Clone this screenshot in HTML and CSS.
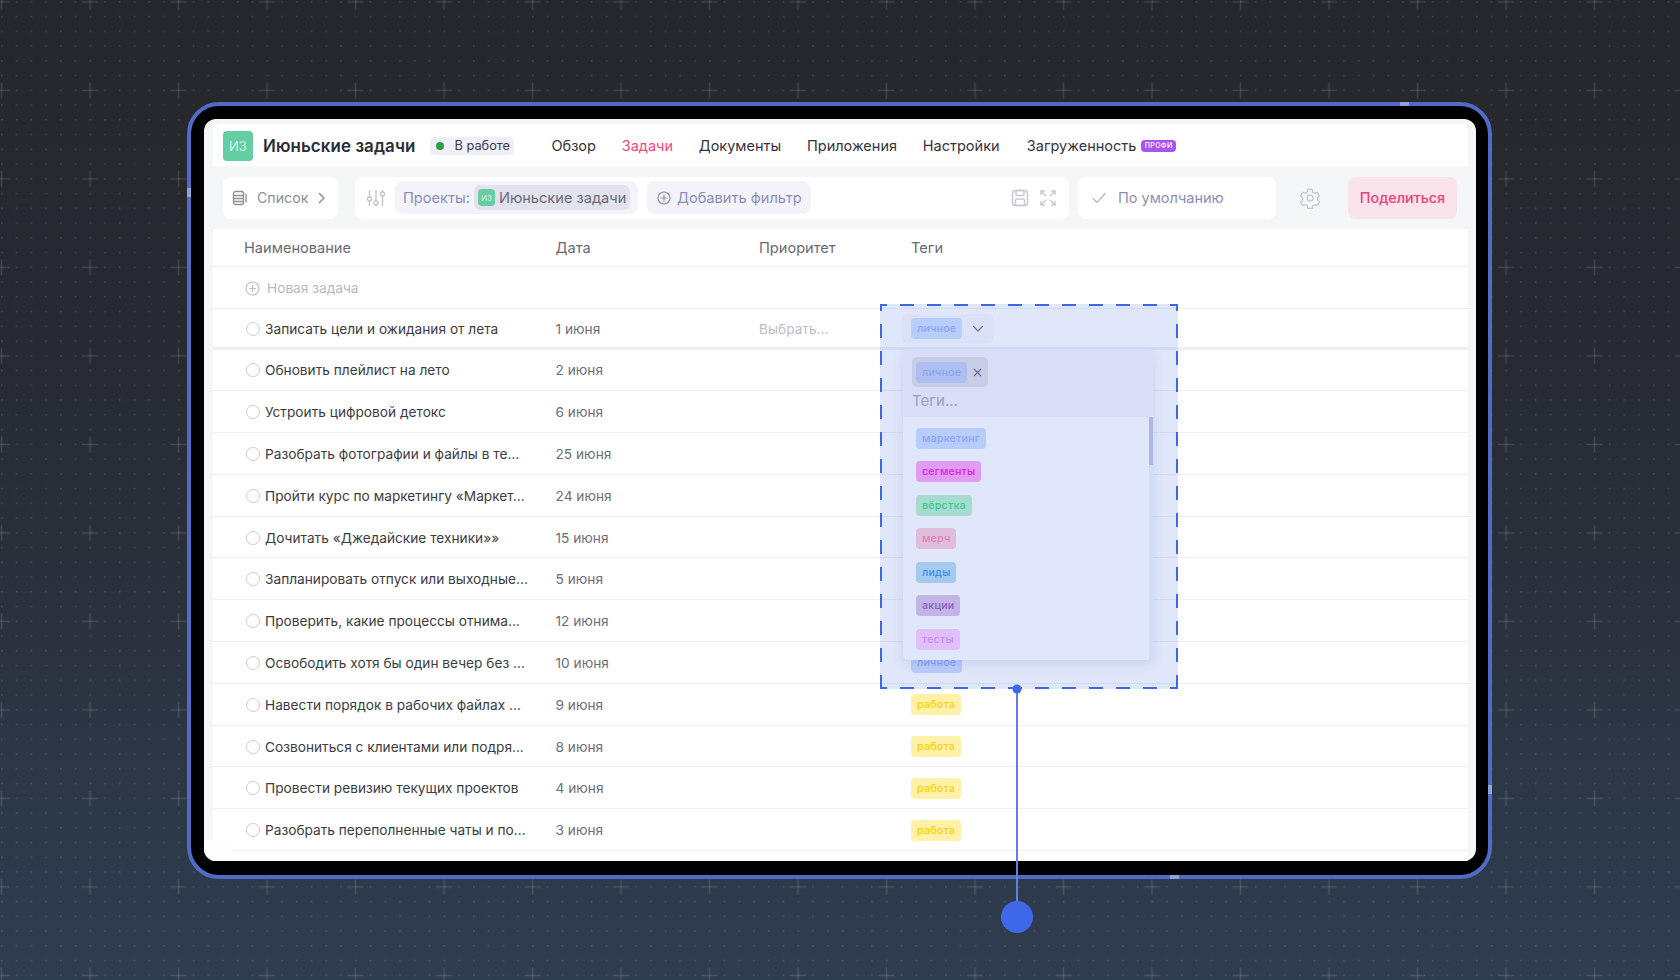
FILE: index.html
```html
<!DOCTYPE html>
<html lang="ru">
<head>
    <meta charset="UTF-8">
    <title>Июньские задачи</title>
    <link rel="stylesheet" href="styles.css">
</head>
<body>
    <!-- Фон: точки и крестики -->
    <svg class="backdrop" width="1680" height="980">
        <defs>
            <pattern id="dots" width="14.75" height="14.75" patternUnits="userSpaceOnUse" x="1" y="1">
                <rect width="1.5" height="1.5" fill="#fff" fill-opacity="0.13"/>
            </pattern>
            <pattern id="crosses" width="88.5" height="88.5" patternUnits="userSpaceOnUse" x="-7" y="-6.5">
                <path d="M0.5 8.5H16.5M8.5 0.5V16.5" stroke="#fff" stroke-opacity="0.12" stroke-width="1.5"/>
            </pattern>
        </defs>
        <rect width="1680" height="980" fill="url(#dots)"/>
        <rect width="1680" height="980" fill="url(#crosses)"/>
    </svg>

    <div class="device">
        <i class="marker marker-left"></i>
        <i class="marker marker-top"></i>
        <i class="marker marker-right"></i>
        <i class="marker marker-bottom"></i>

        <div class="screen">
            <header class="topbar">
                <div class="logo">ИЗ</div>
                <h1 class="title">Июньские задачи</h1>
                <div class="status"><i class="status-dot"></i>В работе</div>
                <nav class="nav">
                    <a>Обзор</a>
                    <a class="active">Задачи</a>
                    <a>Документы</a>
                    <a>Приложения</a>
                    <a>Настройки</a>
                    <a class="nav-last">Загруженность<span class="pro">ПРОФИ</span></a>
                </nav>
            </header>

            <div class="toolbar">
                <div class="card card-list">
                    <svg class="ico" width="16" height="16" viewBox="0 0 16 16" fill="none" stroke="#8e8e9c" stroke-width="1.3">
                        <rect x="1.5" y="1.5" width="10" height="13" rx="2"/>
                        <path d="M1.5 5.5H11.5M1.5 8.5H11.5M1.5 11.5H11.5M14 4V12" stroke-linecap="round"/>
                    </svg>
                    <span>Список</span>
                    <svg class="ico chevron" width="10" height="12" viewBox="0 0 10 12" fill="none" stroke="#8e8e9c" stroke-width="1.5">
                        <path d="M2.5 1.5L7 6L2.5 10.5" stroke-linecap="round" stroke-linejoin="round"/>
                    </svg>
                </div>

                <div class="card card-filter">
                    <svg class="ico sliders" width="20" height="20" viewBox="0 0 20 20" fill="none" stroke="#c4c4ce" stroke-width="1.4">
                        <path d="M3.5 2V9M3.5 13V18M10 2V13M10 17V18M16.5 2V4M16.5 8V18"/>
                        <circle cx="3.5" cy="11" r="2"/>
                        <circle cx="10" cy="15" r="2"/>
                        <circle cx="16.5" cy="6" r="2"/>
                    </svg>
                    <div class="chip-projects">
                        <span class="chip-label">Проекты:</span>
                        <div class="chip-project">
                            <div class="logo logo-small">ИЗ</div>
                            <span>Июньские задачи</span>
                        </div>
                    </div>
                    <div class="chip-add">
                        <svg class="ico" width="14" height="14" viewBox="0 0 14 14" fill="none" stroke="#8b8fb2" stroke-width="1.2">
                            <circle cx="7" cy="7" r="6"/>
                            <path d="M7 4V10M4 7H10" stroke-linecap="round"/>
                        </svg>
                        <span>Добавить фильтр</span>
                    </div>
                    <div class="filter-actions">
                        <svg class="ico" width="18" height="18" viewBox="0 0 18 18" fill="none" stroke="#c9c9d3" stroke-width="1.5">
                            <rect x="1.5" y="1.5" width="15" height="15" rx="3"/>
                            <rect x="5" y="1.5" width="8" height="5" rx="1"/>
                            <rect x="4.5" y="10" width="9" height="6.5" rx="1"/>
                        </svg>
                        <svg class="ico" width="16" height="16" viewBox="0 0 16 16" fill="none" stroke="#c9c9d3" stroke-width="1.5">
                            <path d="M1 5V1H5M1 1L6 6M11 1H15V5M15 1L10 6M1 11V15H5M1 15L6 10M15 11V15H11M15 15L10 10"/>
                        </svg>
                    </div>
                </div>

                <div class="card card-view">
                    <svg class="ico" width="14" height="12" viewBox="0 0 14 12" fill="none" stroke="#b8b8c4" stroke-width="1.3">
                        <path d="M1 6.5L5 10.5L13 1.5" stroke-linecap="round" stroke-linejoin="round"/>
                    </svg>
                    <span>По умолчанию</span>
                </div>

                <svg class="ico gear" width="22" height="22" viewBox="0 0 24 24" fill="none" stroke="#c9c9d3" stroke-width="1.5">
                    <path d="M9.7 2.5h4.6l.6 3 2.3 1.3 2.9-1 2.3 4-2.3 2v2.4l2.3 2-2.3 4-2.9-1-2.3 1.3-.6 3H9.7l-.6-3-2.3-1.3-2.9 1-2.3-4 2.3-2v-2.4l-2.3-2 2.3-4 2.9 1 2.3-1.3z" stroke-linejoin="round"/>
                    <circle cx="12" cy="12" r="3.2"/>
                </svg>

                <button class="share">Поделиться</button>
            </div>

            <div class="table">
                <div class="row row-head">
                    <div>Наименование</div>
                    <div>Дата</div>
                    <div>Приоритет</div>
                    <div>Теги</div>
                </div>
                <div class="row row-new">
                    <div class="task-name">
                        <svg class="ico" width="15" height="15" viewBox="0 0 15 15" fill="none" stroke="#bcbecd" stroke-width="1.2">
                            <circle cx="7.5" cy="7.5" r="6.5"/>
                            <path d="M7.5 4.5V10.5M4.5 7.5H10.5" stroke-linecap="round"/>
                        </svg>
                        <span>Новая задача</span>
                    </div>
                </div>
                <div class="row row-first">
                    <div class="task-name"><i class="radio"></i>Записать цели и ожидания от лета</div>
                    <div class="date">1 июня</div>
                    <div class="choose">Выбрать...</div>
                    <div class="tag-picker">
                        <span class="tag tag-personal">личное</span>
                        <svg width="12" height="8" viewBox="0 0 12 8" fill="none" stroke="#7d8096" stroke-width="1.4">
                            <path d="M1.5 1.5L6 6L10.5 1.5" stroke-linecap="round" stroke-linejoin="round"/>
                        </svg>
                    </div>
                </div>
                <div class="row"><div class="task-name"><i class="radio"></i>Обновить плейлист на лето</div><div class="date">2 июня</div></div>
                <div class="row"><div class="task-name"><i class="radio"></i>Устроить цифровой детокс</div><div class="date">6 июня</div></div>
                <div class="row"><div class="task-name"><i class="radio"></i>Разобрать фотографии и файлы в те...</div><div class="date">25 июня</div></div>
                <div class="row"><div class="task-name"><i class="radio"></i>Пройти курс по маркетингу «Маркет...</div><div class="date">24 июня</div></div>
                <div class="row"><div class="task-name"><i class="radio"></i>Дочитать «Джедайские техники»»</div><div class="date">15 июня</div></div>
                <div class="row"><div class="task-name"><i class="radio"></i>Запланировать отпуск или выходные...</div><div class="date">5 июня</div></div>
                <div class="row"><div class="task-name"><i class="radio"></i>Проверить, какие процессы отнима...</div><div class="date">12 июня</div></div>
                <div class="row"><div class="task-name"><i class="radio"></i>Освободить хотя бы один вечер без ...</div><div class="date">10 июня</div><div></div><div><span class="tag tag-personal">личное</span></div></div>
                <div class="row"><div class="task-name"><i class="radio"></i>Навести порядок в рабочих файлах ...</div><div class="date">9 июня</div><div></div><div><span class="tag tag-work">работа</span></div></div>
                <div class="row"><div class="task-name"><i class="radio"></i>Созвониться с клиентами или подря...</div><div class="date">8 июня</div><div></div><div><span class="tag tag-work">работа</span></div></div>
                <div class="row"><div class="task-name"><i class="radio"></i>Провести ревизию текущих проектов</div><div class="date">4 июня</div><div></div><div><span class="tag tag-work">работа</span></div></div>
                <div class="row"><div class="task-name"><i class="radio"></i>Разобрать переполненные чаты и по...</div><div class="date">3 июня</div><div></div><div><span class="tag tag-work">работа</span></div></div>
            </div>

            <i class="corner-patch"></i>

            <!-- Выпадающий список тегов -->
            <div class="dropdown">
                <div class="dropdown-search">
                    <div class="selected-tag">
                        <span class="tag tag-selected">личное</span>
                        <svg width="9" height="9" viewBox="0 0 9 9" fill="none" stroke="#6d7088" stroke-width="1.3">
                            <path d="M1 1L8 8M8 1L1 8"/>
                        </svg>
                    </div>
                    <div class="placeholder">Теги...</div>
                </div>
                <div class="dropdown-list">
                    <span class="tag tag-marketing">маркетинг</span>
                    <span class="tag tag-segments">сегменты</span>
                    <span class="tag tag-layout">вёрстка</span>
                    <span class="tag tag-merch">мерч</span>
                    <span class="tag tag-leads">лиды</span>
                    <span class="tag tag-promo">акции</span>
                    <span class="tag tag-tests">тесты</span>
                    <div class="scrollbar"><i class="scrollbar-thumb"></i></div>
                </div>
            </div>
        </div>
    </div>

    <!-- Аннотация поверх макета -->
    <svg class="annotation" width="298" height="630" viewBox="0 0 298 630">
        <rect width="298" height="385" fill="#3f68e8" fill-opacity="0.16"/>
        <path d="M0 1H298M0 384H298M1 0V385M297 0V385" fill="none" stroke="#3f68e8" stroke-width="2" stroke-dasharray="14 13" stroke-dashoffset="7"/>
        <path d="M137 385V600" stroke="#5f7fe6" stroke-width="2"/>
        <circle cx="137" cy="385" r="4.5" fill="#3f68e8"/>
        <circle cx="137" cy="613" r="16" fill="#3f68e8"/>
    </svg>
</body>
</html>
```

FILE: styles.css
```css
* {
    box-sizing: border-box;
}
html, body {
    margin: 0;
    height: 980px;
    overflow: hidden;
}
body {
    position: relative;
    padding: 102px 0 0 187px;
    background: linear-gradient(180deg, #25272c 0%, #272a30 35%, #2f3d50 100%);
    font-family: Inter, "Noto Sans", sans-serif;
    color: #34343c;
}
.backdrop {
    position: absolute;
    left: 0;
    top: 0;
}
.device {
    position: relative;
    width: 1305px;
    height: 777px;
    padding: 13px 12px 14px 13px;
    border: 4px solid #4f6bc4;
    border-radius: 32px;
    background: #000;
}
.marker {
    position: absolute;
    background: #8ea2df;
}
.marker-left {
    left: -4px;
    top: 82px;
    width: 4px;
    height: 9px;
}
.marker-top {
    left: 1209px;
    top: -4px;
    width: 9px;
    height: 4px;
}
.marker-right {
    right: -4px;
    top: 679px;
    width: 4px;
    height: 9px;
}
.marker-bottom {
    left: 979px;
    bottom: -4px;
    width: 9px;
    height: 4px;
}
.screen {
    position: relative;
    display: flex;
    flex-direction: column;
    height: 100%;
    padding: 5px 8px 0 9px;
    border-radius: 12px;
    background: #f5f6f8;
    overflow: hidden;
}
.corner-patch {
    position: absolute;
    left: 0;
    bottom: 0;
    width: 28px;
    height: 21px;
    background: #fdfdfd;
}

/* Шапка */
.topbar {
    display: flex;
    flex: none;
    align-items: center;
    height: 42px;
    padding: 1px 0 0 10px;
    border-radius: 6px 6px 0 0;
    background: #fff;
}
.logo {
    display: flex;
    align-items: center;
    justify-content: center;
    width: 30px;
    height: 30px;
    border-radius: 4px;
    background: #63cda3;
    color: #d8f3e8;
    font-size: 13px;
}
.logo-small {
    width: 17px;
    height: 17px;
    font-size: 8px;
    margin-right: 4px;
}
.title {
    margin: 0 0 0 10px;
    font-size: 16.9px;
    font-weight: 600;
    letter-spacing: 0.1px;
    color: #2c2c33;
}
.status {
    display: flex;
    align-items: center;
    width: 84px;
    height: 18px;
    margin-left: 15px;
    padding-left: 6px;
    border-radius: 5px;
    background: #eff0f7;
    font-size: 12.8px;
    color: #3c3c46;
}
.status-dot {
    width: 8px;
    height: 8px;
    margin-right: 10px;
    border-radius: 50%;
    background: #2ea043;
}
.nav {
    display: flex;
    gap: 25.8px;
    margin-left: 37px;
    font-size: 14.5px;
}
.nav a {
    display: flex;
    align-items: center;
    color: #34343c;
}
.nav .active {
    color: #f8477b;
}
.nav .nav-last {
    margin-left: 1.5px;
}
.pro {
    display: inline-block;
    margin-left: 5px;
    padding: 0 3.5px;
    height: 12px;
    border-radius: 4px;
    background: #a855f0;
    color: #f3e6ff;
    font-size: 7px;
    font-weight: 600;
    line-height: 12px;
    letter-spacing: 0.3px;
}

/* Панель фильтров */
.toolbar {
    display: flex;
    flex: none;
    align-items: center;
    height: 63px;
    padding-left: 10px;
}
.card {
    display: flex;
    align-items: center;
    height: 42px;
    border-radius: 8px;
    background: #fff;
    font-size: 14.5px;
    color: #8e8e9c;
}
.ico {
    flex: none;
    display: block;
}
.card-list {
    width: 115px;
    padding-left: 9px;
    font-size: 14.2px;
}
.card-list span {
    margin-left: 9px;
}
.card-list .chevron {
    margin-left: 9px;
}
.card-filter {
    width: 714px;
    margin-left: 17px;
    padding-left: 11px;
}
.sliders {
    margin-right: 9px;
}
.chip-projects {
    display: flex;
    align-items: center;
    height: 33px;
    width: 243px;
    padding-left: 8px;
    border-radius: 8px;
    background: #f3f3f9;
    font-size: 14.6px;
}
.chip-label {
    color: #8b8fb8;
}
.chip-project {
    display: flex;
    align-items: center;
    height: 25px;
    margin-left: 4px;
    padding: 0 4px;
    border-radius: 6px;
    background: #e3e3ee;
    color: #6b6b7c;
}
.chip-add {
    display: flex;
    align-items: center;
    height: 33px;
    width: 164px;
    margin-left: 9px;
    padding-left: 10px;
    border-radius: 8px;
    background: #f3f3f9;
    font-size: 14.6px;
    color: #8b8fb2;
}
.chip-add span {
    margin-left: 6px;
}
.filter-actions {
    display: flex;
    align-items: center;
    gap: 11px;
    margin-left: auto;
    padding-right: 13px;
}
.card-view {
    width: 198px;
    margin-left: 9px;
    padding-left: 14px;
    color: #8b8fb2;
}
.card-view span {
    margin-left: 12px;
}
.gear {
    margin-left: 23px;
}
.share {
    width: 109px;
    height: 42px;
    margin-left: 27px;
    padding: 0;
    border: 0;
    border-radius: 8px;
    background: #f9e3ea;
    color: #f23d76;
    font: 500 14.3px Inter, "Noto Sans", sans-serif;
}

/* Таблица */
.table {
    flex: 1;
    background: #fff;
    font-size: 13.7px;
}
.row {
    display: grid;
    grid-template-columns: 311.5px 203.5px 152px 1fr;
    align-items: center;
    height: 41.8px;
    padding: 1px 0 0 31px;
    border-bottom: 1px solid #eff0f4;
}
.row-head {
    height: 38px;
    padding-top: 0;
    font-size: 14.6px;
    color: #6a6a73;
}
.row-new {
    height: 42px;
    font-size: 13.7px;
    color: #b6b8c9;
}
.row-first {
    height: 40.5px;
    padding-top: 2px;
    border-bottom: 3px solid #eef0f5;
}
.task-name {
    display: flex;
    align-items: center;
    gap: 5.5px;
    white-space: nowrap;
    color: #3c3c44;
}
.row-new .task-name {
    gap: 7px;
    color: #b6b8c9;
}
.row-new .ico {
    margin-left: 1px;
}
.radio {
    flex: none;
    width: 14px;
    height: 14px;
    margin-left: 1.5px;
    border: 1.5px solid #cbcbd6;
    border-radius: 50%;
}
.date {
    color: #6e6e78;
}
.choose {
    color: #bcbcca;
}
.tag {
    display: inline-block;
    height: 21px;
    padding: 0 6px;
    border-radius: 4px;
    font-size: 10.7px;
    font-weight: 500;
    line-height: 21px;
    letter-spacing: 0.2px;
}
.tag-picker {
    display: flex;
    align-items: center;
    gap: 10px;
    width: 91px;
    height: 29px;
    margin-left: -9px;
    padding-left: 9px;
    border-radius: 5px;
    background: #f9f9fb;
}
.tag-personal {
    background: #d0e0ff;
    color: #94b1ff;
}
.tag-work {
    background: #fff1a8;
    color: #fad200;
}

/* Выпадающий список */
.dropdown {
    position: absolute;
    left: 699px;
    top: 230px;
    width: 250px;
    height: 311px;
    border-radius: 5px;
    background: #fff;
    box-shadow: 0 4px 12px rgba(60, 70, 130, 0.14);
    overflow: hidden;
}
.dropdown-search {
    height: 68px;
    padding: 8px 9px 0;
    background: #f6f5f9;
}
.selected-tag {
    display: flex;
    align-items: center;
    gap: 6px;
    width: 76px;
    height: 30px;
    padding-left: 4px;
    border-radius: 5px;
    background: #e3e1e8;
}
.tag-selected {
    background: #c3d0f2;
    color: #9bb2ef;
}
.placeholder {
    margin-top: 4px;
    font-size: 15px;
    color: #a9abbf;
}
.dropdown-list {
    position: relative;
    display: flex;
    flex-direction: column;
    align-items: flex-start;
    gap: 12.5px;
    height: 243px;
    padding: 10.5px 13px;
}
.scrollbar {
    position: absolute;
    right: 0;
    top: 0;
    width: 4px;
    height: 100%;
    background: #f0f2fa;
}
.scrollbar-thumb {
    display: block;
    height: 48px;
    background: #c6c8dc;
}
.tag-marketing {
    background: #d0e0ff;
    color: #94b1ff;
}
.tag-segments {
    background: #ffa5f5;
    color: #ff10e6;
}
.tag-layout {
    background: #baf2cc;
    color: #3edc7e;
}
.tag-merch {
    background: #ffcddb;
    color: #ff87aa;
}
.tag-leads {
    background: #badcf2;
    color: #3c96e6;
}
.tag-promo {
    background: #dcc3e6;
    color: #985ab9;
}
.tag-tests {
    background: #ffd1ff;
    color: #e393f8;
}

.annotation {
    position: absolute;
    left: 880px;
    top: 304px;
}
```
